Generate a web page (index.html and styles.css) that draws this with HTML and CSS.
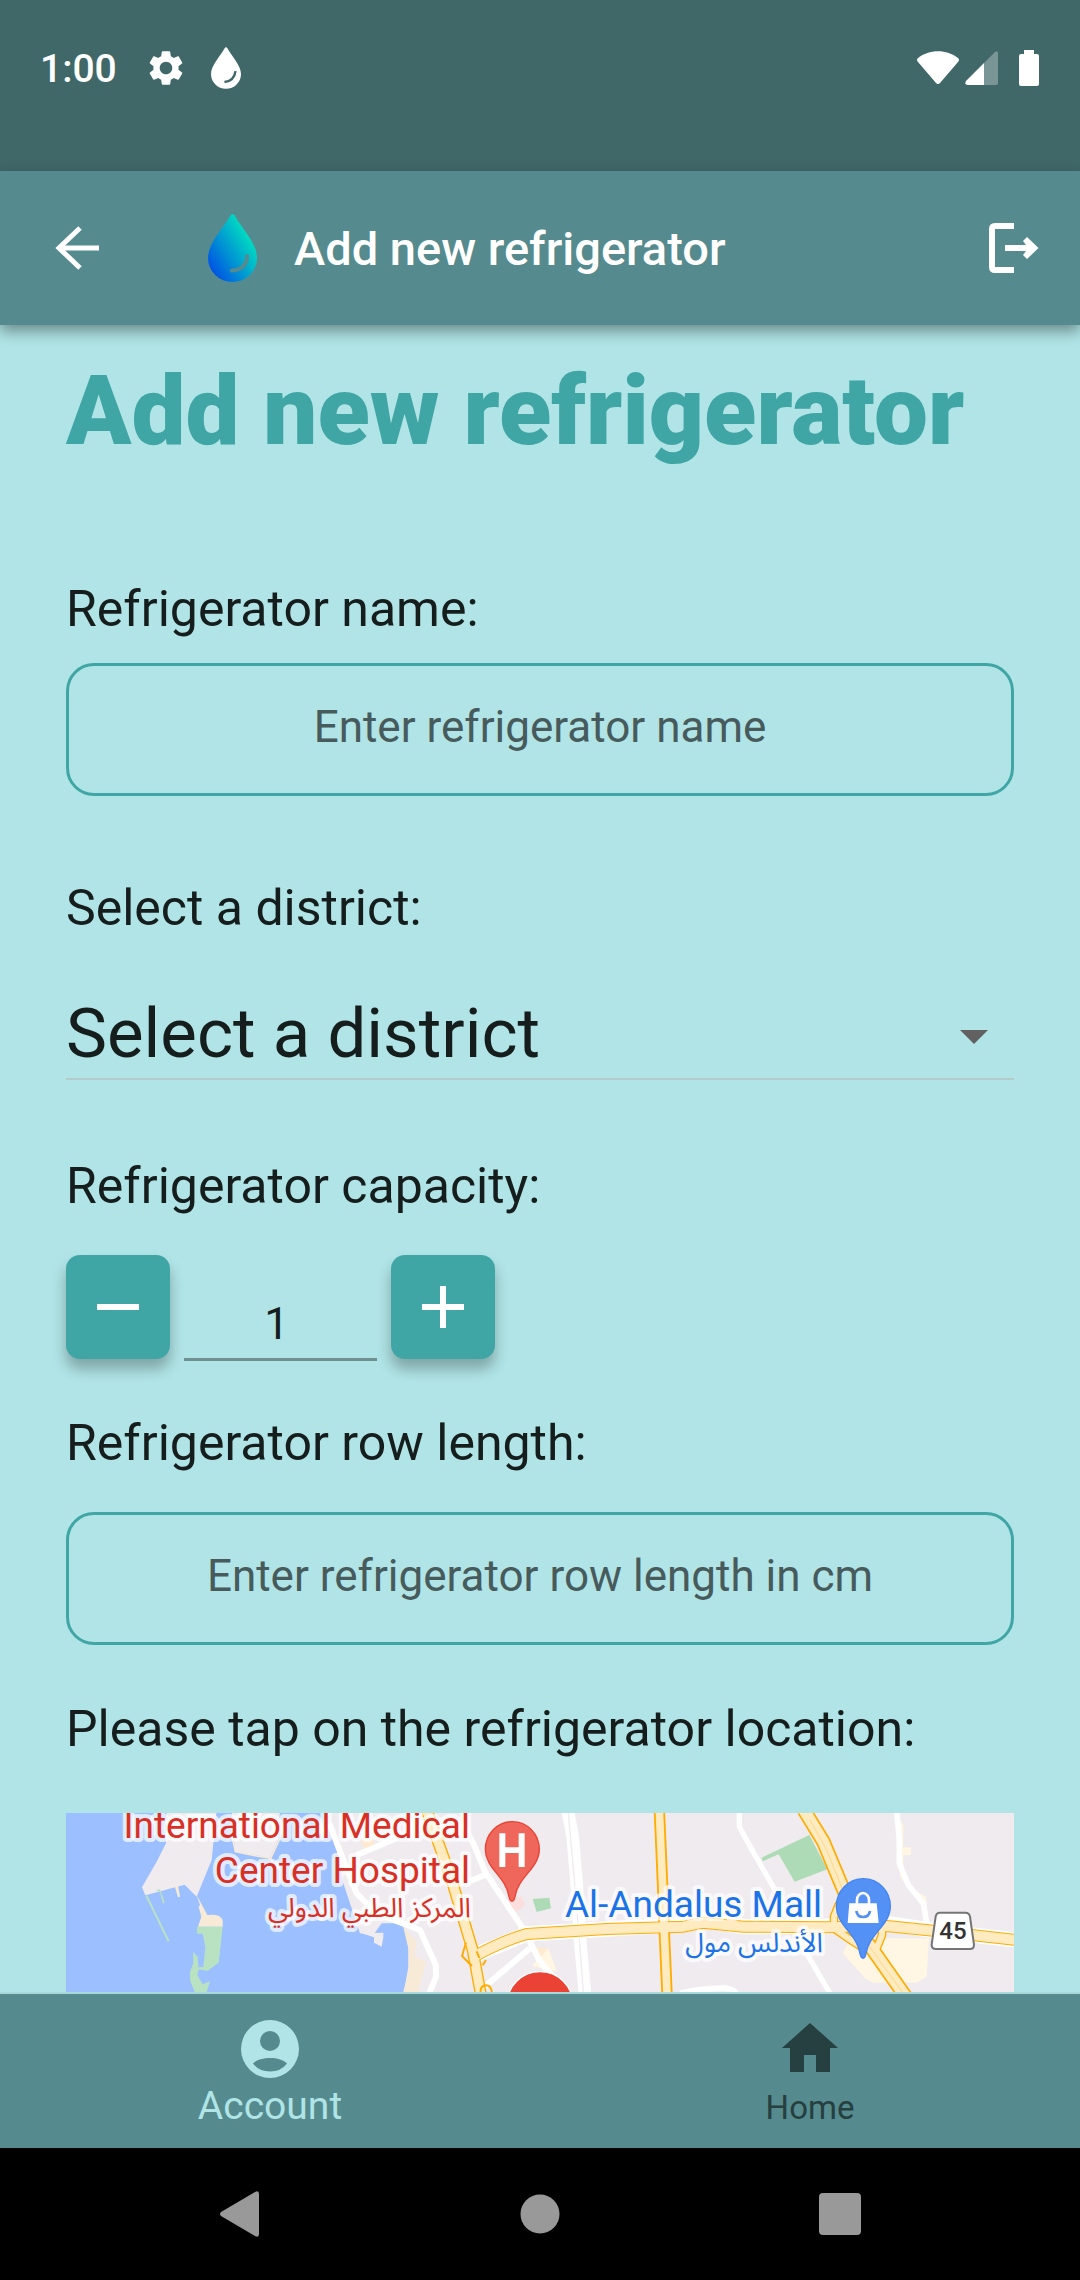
FILE: index.html
```html
<!DOCTYPE html>
<html lang="en">
<head>
<meta charset="utf-8">
<meta name="viewport" content="width=device-width, initial-scale=1">
<title>Add new refrigerator</title>
<link rel="stylesheet" href="styles.css">
</head>
<body>
<div class="status">
  <div class="status-group">
    <span class="clock">1:00</span>
    <svg class="gear" viewBox="0 0 24 24" aria-hidden="true"><path fill="#fff" d="M19.14 12.94c.04-.3.06-.61.06-.94 0-.32-.02-.64-.07-.94l2.03-1.58c.18-.14.23-.41.12-.61l-1.92-3.32c-.12-.22-.37-.29-.59-.22l-2.39.96c-.5-.38-1.03-.7-1.62-.94l-.36-2.54c-.04-.24-.24-.41-.48-.41h-3.84c-.24 0-.43.17-.47.41l-.36 2.54c-.59.24-1.13.57-1.62.94l-2.39-.96c-.22-.08-.47 0-.59.22L2.74 8.87c-.12.21-.08.47.12.61l2.03 1.58c-.05.3-.09.63-.09.94s.02.64.07.94l-2.03 1.58c-.18.14-.23.41-.12.61l1.92 3.32c.12.22.37.29.59.22l2.39-.96c.5.38 1.03.7 1.62.94l.36 2.54c.05.24.24.41.48.41h3.84c.24 0 .44-.17.47-.41l.36-2.54c.59-.24 1.13-.56 1.62-.94l2.39.96c.22.08.47 0 .59-.22l1.92-3.32c.12-.22.07-.47-.12-.61l-2.01-1.58zM12 15.6c-1.98 0-3.6-1.62-3.6-3.6s1.62-3.6 3.6-3.6 3.6 1.62 3.6 3.6-1.62 3.6-3.6 3.6z"/></svg>
    <svg class="drop-small" viewBox="0 0 49 68" aria-hidden="true"><path fill="#fff" d="M22 2Q24.500-2 27 2C34 15 49 29 49 44A24.500 24 0 0 1 0 44C0 29 15 15 22 2Z"/><path d="M22 57Q38 55 40 39" fill="none" stroke="#406869" stroke-width="4"/></svg>
  </div>
  <div class="status-group">
    <svg class="wifi" viewBox="0 0 42 34" aria-hidden="true"><path fill="#fff" d="M1 7C12-2 30-2 41 7Q43 9 41 11L23 32Q21 34 19 32L1 11Q-1 9 1 7Z"/></svg>
    <svg class="signal" viewBox="0 0 33 34" aria-hidden="true"><path fill="#fff" fill-opacity=".3" d="M19 34V12L30 1Q33-1 33 3V32Q33 34 31 34Z"/><path fill="#fff" d="M19 34V12L1 30Q-1 34 3 34Z"/></svg>
    <svg class="battery" viewBox="0 0 20 36" aria-hidden="true"><path fill="#fff" d="M5 0H15V4H18Q20 4 20 6V34Q20 36 18 36H2Q0 36 0 34V6Q0 4 2 4H5Z"/></svg>
  </div>
</div>

<header class="appbar">
  <button class="icon-button" type="button" aria-label="Back">
    <svg class="back" viewBox="0 0 44 44" aria-hidden="true"><path d="M25 2L4 22L25 42M3 22H44" fill="none" stroke="#fff" stroke-width="5"/></svg>
  </button>
  <svg class="logo" viewBox="0 0 49 68" aria-hidden="true">
    <defs><linearGradient id="water" x1="0.100" y1="0.950" x2="0.850" y2="0.300"><stop offset="0" stop-color="#004be6"/><stop offset=".5" stop-color="#0096d2"/><stop offset="1" stop-color="#00dfc0"/></linearGradient></defs>
    <path fill="url(#water)" d="M22 2Q24.500-2 27 2C34 15 49 29 49 44A24.500 24 0 0 1 0 44C0 29 15 15 22 2Z"/>
    <path d="M24 56.500Q38.500 55.500 39.200 42" fill="none" stroke="#558b8e" stroke-width="4" stroke-linecap="round"/>
  </svg>
  <span class="appbar-title">Add new refrigerator</span>
  <button class="icon-button logout" type="button" aria-label="Log out">
    <svg viewBox="0 0 50 50" aria-hidden="true"><path d="M25 3H6Q3 3 3 6V44Q3 47 6 47H25" fill="none" stroke="#fff" stroke-width="6"/><path d="M16 22H37L34 18L38 14L49.500 25L38 36L34 32L37 28H16Z" fill="#fff"/></svg>
  </button>
</header>

<main class="content">
  <h1 class="title">Add new refrigerator</h1>
  <form class="form">
    <div class="field field-name">
      <label class="label" for="name">Refrigerator name:</label>
      <input class="box" id="name" type="text" placeholder="Enter refrigerator name">
    </div>
    <div class="field field-district">
      <label class="label" for="district">Select a district:</label>
      <div class="select-wrap">
        <select class="select" id="district"><option>Select a district</option></select>
        <svg class="caret" viewBox="0 0 28 14" aria-hidden="true"><path d="M0 0H28L14 14Z" fill="#616161"/></svg>
      </div>
    </div>
    <div class="field">
      <label class="label" for="capacity">Refrigerator capacity:</label>
      <div class="stepper">
        <button class="step" type="button" aria-label="Decrease"><svg viewBox="0 0 42 42" aria-hidden="true"><path d="M0 21H42" stroke="#fff" stroke-width="6"/></svg></button>
        <input class="count" id="capacity" type="text" inputmode="numeric" value="1">
        <button class="step" type="button" aria-label="Increase"><svg viewBox="0 0 42 42" aria-hidden="true"><path d="M0 21H42M21 0V42" stroke="#fff" stroke-width="6"/></svg></button>
      </div>
    </div>
    <div class="field">
      <label class="label" for="row">Refrigerator row length:</label>
      <input class="box" id="row" type="text" placeholder="Enter refrigerator row length in cm">
    </div>
  </form>
  <p class="label map-label">Please tap on the refrigerator location:</p>
  <div class="map">
    <svg viewBox="0 0 948 179" preserveAspectRatio="xMidYMin slice" role="img" aria-label="Map">
      <g transform="translate(-6 -13) scale(.33333)">
        <path fill="#9cc0ff" d="M0 0H780L830 150L850 250L880 340L900 400L940 405L965 370L1028 370L1045 440V500L1028 600H0Z"/>
        <path fill="#efebef" d="M320 30H470L455 180L410 290L374 254L256 286L246 262L290 185L318 130ZM515 30H660L655 120L630 175L585 165L525 155ZM905 400L970 398V412L965 440L942 428V412Z"/>
        <path fill="#f7ead6" d="M344 258L354 256L360 290L354 292ZM410 285L442 345Q480 340 488 360V380H414L424 350L416 320L420 315ZM1028 370L1042 395L1070 425L1062 468L1098 485L1074 576H1030L1046 510V450Z"/>
        <path fill="none" stroke="#f7ead6" stroke-width="5" d="M517 112L526 155L590 168L632 175L660 115M632 175L652 208"/>
        <path fill="#b9e2c3" d="M411 380H488L476 488L442 513L415 508L418 501L430 501L436 440L428 401H411ZM399 456L413 470L416 510L412 525L428 553L450 544L440 576H404L390 540V515L400 490ZM286 270L300 268L314 305L309 312L300 276Z"/>
        <path stroke="#b9e2c3" stroke-width="6" d="M259 287L326 424"/>
        <path fill="#feead0" d="M780 60L800 100L790 110L772 90ZM900 115L940 115L945 145L915 150ZM1380 350L1415 440L1465 445L1490 515L1420 500L1435 480L1410 430L1370 370Z"/>
        <path fill="#fff6e4" d="M1470 460L1488 512L1475 512ZM1416 498L1465 445L1490 515ZM2375 410L2348 460L2415 535L2440 548H2540L2570 548L2600 530L2607 415H2460ZM2522 60L2530 75V142H2553V165H2530V215L2545 260L2598 290L2602 320L2570 290L2520 230Z"/>
        <path fill="#addbb6" d="M1418 297L1468 293L1473 325L1430 336ZM2105 173L2248 105L2302 208L2204 245L2156 163L2108 184ZM1462 320L1472 318V326Z"/>
        <path fill="#fcdedc" d="M1340 300L1385 290L1395 315L1370 335L1345 325Z"/>
        <g fill="none" stroke="#fff" stroke-linejoin="round">
          <path stroke-width="18" d="M808 70L850 180L890 280L950 340L1080 390L1127 495L1128 530L1108 580"/>
          <path stroke-width="18" d="M1205 70L1240 130L1275 215L1395 395L1440 485L1480 530M890 165L1010 115M1225 245L1275 225M1250 580L1410 445"/>
          <path stroke-width="38" d="M1523 30L1538 110L1550 250L1562 440L1575 580"/>
          <path stroke-width="16" d="M2038 30V80L2065 130L2145 270L2190 350L2240 460L2310 580"/>
          <path stroke-width="17" d="M2510 30L2518 120V190L2545 255L2590 310L2602 380"/>
          <path stroke-width="18" d="M1860 580Q1930 565 1990 565Q2015 565 2030 580"/>
        </g>
        <path fill="none" stroke="#efebef" stroke-width="4" d="M1525 40L1544 250L1560 440L1570 580"/>
        <g fill="none" stroke-linejoin="round">
          <path stroke="#fff" stroke-width="46" d="M1245 465Q1330 430 1400 402L1640 387L1870 374L1930 360L2050 380L2300 378L2480 370L2620 392L2870 420"/>
          <path stroke="#ffab00" stroke-width="36" d="M1245 468Q1330 422 1400 402L1640 387L1870 380L1930 368L2050 380L2300 382L2480 378L2620 392L2870 420"/>
          <path stroke="#ffab00" stroke-width="36" d="M1100 30L1175 240L1238 450L1262 580"/>
          <path stroke="#ffab00" stroke-width="34" d="M1798 30L1808 260L1814 420L1821 580"/>
          <path stroke="#ffab00" stroke-width="44" d="M2232 30L2290 125L2355 280L2400 400L2435 445L2537 590"/>
          <path stroke="#ffab00" stroke-width="26" d="M2338 310L2322 350V385L2380 425L2420 450M2440 320L2466 365V405L2450 445"/>
          <path stroke="#ffebbf" stroke-width="30" d="M1245 468Q1330 422 1400 402L1640 387L1870 380L1930 368L2050 380L2300 382L2480 378L2620 392L2870 420"/>
          <path stroke="#ffebbf" stroke-width="28" d="M1100 30L1175 240L1238 450L1262 580"/>
          <path stroke="#ffebbf" stroke-width="23" d="M1798 30L1808 260L1814 420L1821 580"/>
          <path stroke="#ffebbf" stroke-width="34" d="M2232 30L2290 125L2355 280L2400 400L2435 445L2537 590"/>
          <path stroke="#ffebbf" stroke-width="18" d="M2338 310L2322 350V385L2380 425L2420 450M2440 320L2466 365V405L2450 445"/>
          <path stroke="#fdd98a" stroke-width="3" d="M2250 60L2300 150L2360 300M2425 435L2530 580"/>
          <path stroke="#ffab00" stroke-width="6" d="M1218 428L1206 468L1236 498M1250 454L1258 474M1268 496L1278 480M1262 576Q1260 558 1278 556Q1292 556 1296 576"/>
        </g>
        <circle cx="1440" cy="614" r="99" fill="#ea4335" stroke="#fff" stroke-width="4"/>
        <path d="M1356 304Q1350 304 1347 290C1338 230 1276 205 1276 148A80 82 0 0 1 1438 148C1438 205 1374 230 1365 290Q1362 304 1356 304Z" fill="#ef665b" stroke="#ea4335" stroke-width="4"/>
        <path d="M1318 100H1336V142H1376V100H1394V201H1376V159H1336V201H1318Z" fill="#fff"/>
        <path d="M2409 475Q2403 475 2400 461C2391 401 2329 376 2329 319A80 82 0 0 1 2491 319C2491 376 2427 401 2418 461Q2415 475 2409 475Z" fill="#5491f5" stroke="#4285f4" stroke-width="4"/>
        <path d="M2368 310H2450L2456 369H2363Z" fill="#fff"/>
        <path d="M2391 311V300A18 21 0 0 1 2427 300V311" fill="none" stroke="#fff" stroke-width="8"/>
        <path d="M2389 333Q2392 351 2409 351Q2427 351 2430 333" fill="none" stroke="#5491f5" stroke-width="8"/>
        <path d="M2640 338H2716Q2728 338 2730 350L2742 434Q2742 447 2730 447H2628Q2615 447 2615 434L2627 350Q2629 338 2640 338Z" fill="#fff" stroke="#757575" stroke-width="6"/>
      </g>
      <g class="place hospital">
        <text x="404" y="25">International Medical</text>
        <text x="404" y="70">Center Hospital</text>
        <text class="arabic" x="405" y="104">المركز الطبي الدولي</text>
      </g>
      <g class="place mall">
        <text x="756" y="104">Al-Andalus Mall</text>
        <text class="arabic" x="757" y="139">الأندلس مول</text>
      </g>
      <text class="route" x="887" y="126">45</text>
    </svg>
  </div>
</main>

<nav class="tabs">
  <a class="tab tab-active" href="#account">
    <svg viewBox="0 0 58 58" aria-hidden="true"><path fill="currentColor" fill-rule="evenodd" d="M29 0A29 29 0 1 0 29 58A29 29 0 1 0 29 0ZM29 11A10 10 0 1 1 29 31A10 10 0 1 1 29 11ZM29 38C36 38 43 40 46 43.500Q40 51.500 29 51.500Q18 51.500 12 43.500C15 40 22 38 29 38Z"/></svg>
    <span>Account</span>
  </a>
  <a class="tab" href="#home">
    <svg viewBox="0 0 58 58" aria-hidden="true"><path fill="currentColor" d="M29 3L57 28H49V52H35V35H23V52H9V28H1Z"/></svg>
    <span>Home</span>
  </a>
</nav>

<div class="system">
  <button type="button" aria-label="System back"><svg viewBox="0 0 46 46" aria-hidden="true"><path d="M38 1Q42 -1 42 3V43Q42 47 38 45L4 25Q2 23 4 21Z" fill="#999"/></svg></button>
  <button type="button" aria-label="System home"><svg viewBox="0 0 46 46" aria-hidden="true"><circle cx="23" cy="23" r="19.500" fill="#999"/></svg></button>
  <button type="button" aria-label="Recent apps"><svg viewBox="0 0 46 46" aria-hidden="true"><rect x="2" y="2" width="42" height="42" rx="4" fill="#999"/></svg></button>
</div>
</body>
</html>
```
FILE: styles.css
```css
* {
  box-sizing: border-box;
}

body {
  margin: 0;
  min-height: 100vh;
  display: flex;
  flex-direction: column;
  background: #b0e4e6;
  color: #161d1d;
  font-family: Roboto, "Noto Sans", sans-serif;
}

svg {
  display: block;
  flex: none;
}

button {
  border: 0;
  padding: 0;
  background: none;
  display: flex;
  align-items: center;
  justify-content: center;
}

.status {
  display: flex;
  justify-content: space-between;
  align-items: center;
  padding: 40px 41px 75px 40px;
  background: #406869;
  color: #fff;
}

.status-group {
  display: flex;
  align-items: center;
  height: 56px;
}

.clock {
  padding-top: 2px;
  font-size: 39px;
  line-height: 56px;
  font-weight: 500;
}

.gear {
  width: 42px;
  height: 42px;
  margin-left: 28px;
}

.drop-small {
  width: 30px;
  height: 42px;
  margin-left: 24px;
}

.wifi {
  width: 42px;
  height: 34px;
}

.signal {
  width: 33px;
  height: 34px;
  margin-left: 6px;
}

.battery {
  width: 20px;
  height: 36px;
  margin-left: 21px;
}

.appbar {
  display: flex;
  align-items: center;
  height: 154px;
  padding: 0 41px 0 55px;
  background: #558b8e;
  color: #fff;
  box-shadow: 0 6px 14px rgba(0, 0, 0, .4);
  position: relative;
}

.back {
  width: 44px;
  height: 44px;
}

.logo {
  width: 49px;
  height: 68px;
  margin: 0 37px 0 109px;
}

.appbar-title {
  padding-top: 2px;
  font-size: 47px;
  line-height: 60px;
  font-weight: 500;
}

.logout {
  margin-left: auto;
}

.logout svg {
  width: 50px;
  height: 50px;
}

.content {
  flex: 1;
  display: flex;
  flex-direction: column;
  padding: 30px 66px 0;
}

.title {
  margin: 0 0 112px;
  color: #40a5a5;
  font-size: 96px;
  line-height: 112px;
  font-weight: 900;
}

.form {
  display: flex;
  flex-direction: column;
  gap: 54px;
}

.field {
  display: flex;
  flex-direction: column;
  gap: 39px;
}

.field-name {
  gap: 24px;
  margin-bottom: 28px;
}

.field-district {
  gap: 56px;
  margin-bottom: 22px;
}

.label {
  margin: 0;
  font-size: 50px;
  line-height: 60px;
}

.box {
  width: 100%;
  height: 133px;
  padding: 0 24px 6px;
  border: 3px solid #40a5a5;
  border-radius: 28px;
  background: none;
  font: inherit;
  font-size: 44px;
  text-align: center;
  color: inherit;
}

.box::placeholder {
  color: #475b5c;
  opacity: 1;
}

.select-wrap {
  display: grid;
  align-items: center;
}

.select-wrap > * {
  grid-area: 1 / 1;
}

.select {
  width: 100%;
  height: 86px;
  padding: 0 0 4px;
  border: 0;
  border-bottom: 2px solid #b3cbcc;
  border-radius: 0;
  appearance: none;
  background: none;
  color: inherit;
  font: inherit;
  font-size: 69px;
  line-height: 80px;
}

.caret {
  width: 28px;
  height: 14px;
  justify-self: end;
  margin-right: 26px;
  pointer-events: none;
}

.stepper {
  display: flex;
  gap: 14px;
}

.step {
  width: 104px;
  height: 104px;
  border-radius: 14px;
  background: #40a5a5;
  box-shadow: 0 10px 14px rgba(0, 0, 0, .28);
}

.step svg {
  width: 42px;
  height: 42px;
}

.count {
  width: 193px;
  height: 106px;
  margin-bottom: -2px;
  padding: 34px 8px 0 0;
  border: 0;
  border-bottom: 3px solid #6f8f91;
  background: none;
  font: inherit;
  font-size: 44px;
  text-align: center;
  color: inherit;
}

.map-label {
  margin: 54px 0;
}

.map {
  flex: 1 0 160px;
  height: 0;
  overflow: hidden;
  background: #efebef;
}

.map svg {
  width: 100%;
  height: 100%;
}

.place text {
  font-size: 37px;
  text-anchor: end;
  paint-order: stroke;
  stroke: rgba(255, 255, 255, .7);
  stroke-width: 8px;
  stroke-linejoin: round;
}

.place .arabic {
  font-family: "Noto Sans Arabic", "DejaVu Sans", sans-serif;
  font-size: 27px;
  direction: rtl;
  text-anchor: start;
}

.hospital {
  fill: #d93025;
}

.mall {
  fill: #1a73e8;
}

.route {
  font-size: 24px;
  font-weight: 500;
  text-anchor: middle;
  fill: #333;
}

.tabs {
  display: flex;
  height: 156px;
  border-top: 2px solid #a8dadc;
  background: #558b8e;
}

.tab {
  flex: 1;
  display: flex;
  flex-direction: column;
  align-items: center;
  padding-top: 26px;
  color: #263f40;
  font-size: 33px;
  line-height: 60px;
  text-decoration: none;
}

.tab svg {
  width: 58px;
  height: 58px;
}

.tab-active {
  color: #b0e4e6;
  font-size: 39px;
  line-height: 56px;
}

.system {
  display: flex;
  justify-content: space-around;
  align-items: center;
  height: 132px;
  padding: 0 90px;
  background: #000;
}

.system svg {
  width: 46px;
  height: 46px;
}
```
